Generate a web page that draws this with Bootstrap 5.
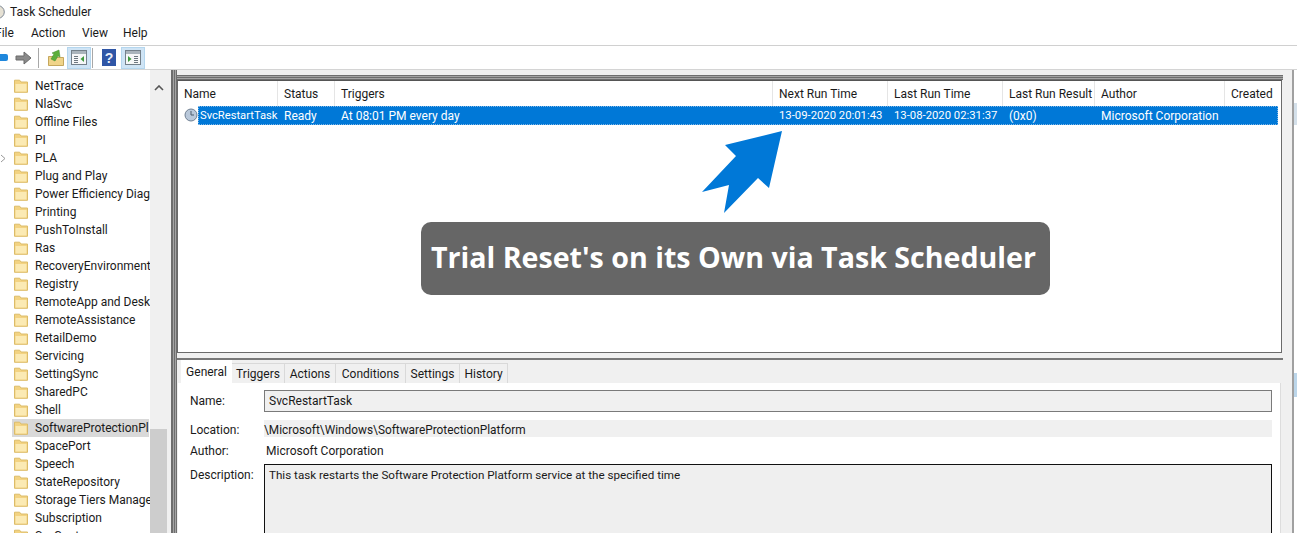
<!DOCTYPE html>
<html><head><meta charset="utf-8">
<link href="https://cdn.jsdelivr.net/npm/bootstrap@5.3.0/dist/css/bootstrap.min.css" rel="stylesheet">
<style>
html,body{width:1297px;height:533px;overflow:hidden;background:#fff}
body{font-family:Roboto,"Open Sans",sans-serif;font-size:12px;line-height:16px;color:#1a1a1a;position:relative}
.title-bar{height:23px;padding-left:10px;gap:5px}
.title-bar svg{margin-left:-19px;flex:none}
.menu-bar{border-bottom:1px solid #d0d0d0;height:23px;padding-bottom:2px}
.menu-bar span{flex:none}
.m-file{margin-left:-5px;width:36px}.m-action{width:51px}.m-view{width:41px}
.tool-bar{height:24px;border-bottom:1px solid #d4d4d4;background:#fff}
.tb-sep{width:1px;height:20px;background:#a8a8a8}
.tb-on{width:24px;height:22px;background:#cfe4f5;border:1px solid #b4d6ee}
.work{height:464px;background:#f0f0f0}
.tree{width:167px;background:#fff;flex:none}
.tree-list{width:150px;padding-top:7px;flex:none;overflow:hidden}
.tree-row{height:18px;padding-left:14px;gap:7px;white-space:nowrap;position:relative}
.tree-row.sel{background:#d9d9d9;margin-left:12px;width:137px;padding-left:2px;overflow:hidden}
.tree-row svg{flex:none}
.tree-chev{position:absolute;left:0;top:5px}
.s-track{width:17px;background:#f0f0f0;flex:none}
.s-up{height:17px;margin-top:9px;margin-bottom:333px}
.s-thumb{background:#cdcdcd;flex:1}
.panes{width:1112px;margin-left:4px;flex:none}
.split-bar{width:6px;flex:none;background:linear-gradient(90deg,#6e6e6e 0 2px,#a4a4a4 2px 3px,#6e6e6e 3px 4px,#a4a4a4 4px 5px,#6e6e6e 5px 6px)}
.pane-stack{width:1106px;flex:none}
.pane-cap{height:5px;margin-top:5px;width:1108px;background:linear-gradient(180deg,#6e6e6e 0 1px,#a4a4a4 1px 2px,#6e6e6e 2px 3px,#a4a4a4 3px 4px,#6e6e6e 4px 5px)}
.list-box{height:273px;width:1105px;background:#fff;border:1px solid #6b6b6b;border-top-color:#555}
.col-grid{display:grid;grid-template-columns:100px 57px 438px 115px 115px 92px 130px 56px}
.head-row{height:25px}
.head-row>div{padding:5px 0 0 6px;border-right:1px solid #e5e5e5;white-space:nowrap}
.body-row{height:19px;padding-left:20px}
.body-row svg{flex:none;margin-left:-14px;margin-top:2px}
.sel-bar{background:#0078d7;color:#fff;width:1080px;grid-template-columns:80px 57px 438px 115px 115px 92px 130px 53px;height:19px;outline:1px dotted #7fb6e6;outline-offset:-1px}
.sel-bar>div{padding:2px 0 0 6px;white-space:nowrap}
.sel-bar>div:first-child{padding-left:2px;font-size:11.2px}
.sel-date{font-size:11.3px}
.pane-bottom{margin-top:5px;border-top:2px solid #777;padding:0 2px 0 1px;height:175px}
.tab-row{height:23px;padding-left:3px;align-items:flex-end}
.tab-item{height:20px;padding-top:2px;text-align:center;background:#f0f0f0;border-right:1px solid #d9d9d9;border-top:1px solid #d9d9d9;white-space:nowrap}
.tab-item:nth-child(1){background:#fff;height:23px;border:0;width:51px;padding-top:4px}
.tab-item:nth-child(2){width:53px}.tab-item:nth-child(3){width:51px}.tab-item:nth-child(4){width:70px}.tab-item:nth-child(5){width:54px}.tab-item:nth-child(6){width:48px}
.tab-body{background:#fff;height:152px;padding:7px 8px 0 12px;border-right:1px solid #ddd;width:1103px}
.f-label{width:74px;flex:none}
.f-name{height:22px;background:#f0f0f0;border:1px solid #7a7a7a;flex:1;padding:2px 4px 0}
.f-loc{height:17px;background:#f0f0f0;flex:1;margin-top:8px;padding:2px 0 0 0;font-size:11.85px}
.f-auth{height:27px;padding:6px 0 0 2px}
.f-desc{height:80px;background:#efefef;border:1px solid #111;flex:1;padding:2px 4px;font-size:11.65px}
.lbl-a{padding-top:3px}.lbl-b{padding-top:10px;height:25px}.lbl-c{padding-top:6px}
.right-strip{flex:1;background:#fff;position:relative}
.strip-core{width:11px;height:100%;background:#f0f0f0;border-right:2px solid #a0a0a0}
.strip-blue{position:absolute;right:0;width:3px;background:#bcd6ea}
.strip-blue.b1{top:33px;height:22px;background:#d4e0ea}
.strip-blue.b2{top:303px;height:24px}
.banner-box{position:absolute;left:421px;top:222px;width:629px;height:73px;padding-right:4px;background:#666;border-radius:10px;color:#fff;font-family:"Open Sans","Noto Sans",sans-serif;font-weight:700;font-size:28.6px;line-height:70px;text-align:center;white-space:nowrap}
.arrow-mark{position:absolute;left:700px;top:129px}
</style></head><body>
<div class="title-bar d-flex align-items-center">
<svg width="14" height="14" viewBox="0 0 14 14"><circle cx="7" cy="7" r="6.3" fill="#e6e1d4" stroke="#7d8794"/></svg>
<span>Task Scheduler</span></div>
<div class="menu-bar d-flex align-items-center"><span class="m-file">File</span><span class="m-action">Action</span><span class="m-view">View</span><span>Help</span></div>
<div class="tool-bar d-flex align-items-center">
<svg width="8" height="10" viewBox="0 0 8 10"><rect x="-3" y="1" width="11" height="7" rx="2" fill="#1f87dc"/></svg>
<svg width="18" height="14" viewBox="0 0 18 14" style="margin-left:7px"><path d="M1 5h8V1l7 6-7 6V9H1z" fill="#8a8a8a" stroke="#6a6a6a"/></svg>
<span class="tb-sep" style="margin-left:5px"></span>
<svg width="16" height="17" viewBox="0 0 16 17" style="margin-left:9px"><path d="M.5 7.5h5l1 1h9v8H.5z" fill="#f0d48a" stroke="#b79543" stroke-width=".8"/><path d="M3 10l3-5-2-1 7-3 1 7-2-1-3 5z" fill="#5dae3a" stroke="#3c8a28" stroke-width=".5"/></svg>
<span class="tb-on d-flex align-items-center justify-content-center" style="margin-left:3px"><svg width="16" height="15" viewBox="0 0 16 15"><rect x=".5" y=".5" width="15" height="14" fill="#f6f7f8" stroke="#74808a"/><rect x="1" y="1" width="14" height="3" fill="#aab4bc"/><path d="M3 6.5h4M3 8.5h4M3 10.5h4M3 12.5h4" stroke="#6d7780"/><path d="M13 6v6l-3.5-3z" fill="#3f9a3f"/></svg></span>
<span class="tb-sep" style="margin-left:1px"></span>
<svg width="14" height="17" viewBox="0 0 14 17" style="margin-left:9px"><rect width="14" height="17" fill="#2f56a6"/><text x="7" y="13.5" text-anchor="middle" font-size="14" font-weight="700" fill="#e8eef8" font-family="Liberation Sans">?</text></svg>
<span class="tb-on d-flex align-items-center justify-content-center" style="margin-left:5px"><svg width="16" height="15" viewBox="0 0 16 15"><rect x=".5" y=".5" width="15" height="14" fill="#f6f7f8" stroke="#74808a"/><rect x="1" y="1" width="14" height="3" fill="#aab4bc"/><path d="M9 6.5h4M9 8.5h4M9 10.5h4M9 12.5h4" stroke="#6d7780"/><path d="M3 6v6l3.5-3z" fill="#3f9a3f"/></svg></span>
</div>
<div class="work d-flex">
<div class="tree d-flex">
<div class="tree-list" id="tree"></div>
<div class="s-track d-flex flex-column">
<div class="s-up d-flex justify-content-center align-items-center"><svg width="10" height="6" viewBox="0 0 10 6"><path d="M1 5l4-4 4 4" fill="none" stroke="#555" stroke-width="1.6"/></svg></div>
<div class="s-thumb"></div></div>
</div>
<div class="panes d-flex">
<div class="split-bar"></div>
<div class="pane-stack">
<div class="pane-cap"></div>
<div class="list-box">
<div class="col-grid head-row"><div>Name</div><div>Status</div><div>Triggers</div><div>Next Run Time</div><div>Last Run Time</div><div>Last Run Result</div><div>Author</div><div class="border-0">Created</div></div>
<div class="body-row d-flex">
<svg width="14" height="14" viewBox="0 0 14 14"><circle cx="7" cy="7" r="6" fill="#b9c8da" stroke="#6f7f92"/><path d="M7 3v4h3" fill="none" stroke="#4d5b6b"/></svg>
<div class="col-grid sel-bar"><div>SvcRestartTask</div><div>Ready</div><div>At 08:01 PM every day</div><div class="sel-date">13-09-2020 20:01:43</div><div class="sel-date">13-08-2020 02:31:37</div><div>(0x0)</div><div>Microsoft Corporation</div><div></div></div>
</div>
</div>
<div class="pane-bottom">
<div class="tab-row d-flex"><div class="tab-item">General</div><div class="tab-item">Triggers</div><div class="tab-item">Actions</div><div class="tab-item">Conditions</div><div class="tab-item">Settings</div><div class="tab-item">History</div></div>
<div class="tab-body">
<div class="d-flex"><div class="f-label lbl-a">Name:</div><div class="f-name">SvcRestartTask</div></div>
<div class="d-flex"><div class="f-label lbl-b">Location:</div><div class="f-loc">\Microsoft\Windows\SoftwareProtectionPlatform</div></div>
<div class="d-flex"><div class="f-label lbl-c">Author:</div><div class="f-auth">Microsoft Corporation</div></div>
<div class="d-flex"><div class="f-label lbl-a">Description:</div><div class="f-desc">This task restarts the Software Protection Platform service at the specified time</div></div>
</div>
</div>
</div>
</div>
<div class="right-strip"><div class="strip-core"></div><div class="strip-blue b1"></div><div class="strip-blue b2"></div></div>
</div>
<svg class="arrow-mark" width="84" height="86" viewBox="700 129 84 86"><path d="M782 131L725 145 736 156 702 192 729 185 724 213 758 178 769 188z" fill="#0078d7"/></svg>
<div class="banner-box">Trial Reset's on its Own via Task Scheduler</div>
<script>
const names=["NetTrace","NlaSvc","Offline Files","PI","PLA","Plug and Play","Power Efficiency Diag","Printing","PushToInstall","Ras","RecoveryEnvironment","Registry","RemoteApp and Desk","RemoteAssistance","RetailDemo","Servicing","SettingSync","SharedPC","Shell","SoftwareProtectionPla","SpacePort","Speech","StateRepository","Storage Tiers Manage","Subscription","SysCont"];
const folder='<svg width="14" height="14" viewBox="0 0 14 14"><path d="M.5 3V1.2h5.2L7 3h6.5v10.3H.5z" fill="#f3d382" stroke="#dcbc68"/><rect x="1.5" y="5" width="11" height="7.5" fill="#fbeab4"/></svg>';
document.getElementById('tree').innerHTML=names.map((n,i)=>'<div class="tree-row d-flex align-items-center'+(n.startsWith('SoftwareP')?' sel':'')+'">'+(n=='PLA'?'<svg class="tree-chev" width="6" height="9" viewBox="0 0 6 9"><path d="M1 1l4 3.5L1 8" fill="none" stroke="#999"/></svg>':'')+folder+'<span>'+n+'</span></div>').join('');
</script>
</body></html>
